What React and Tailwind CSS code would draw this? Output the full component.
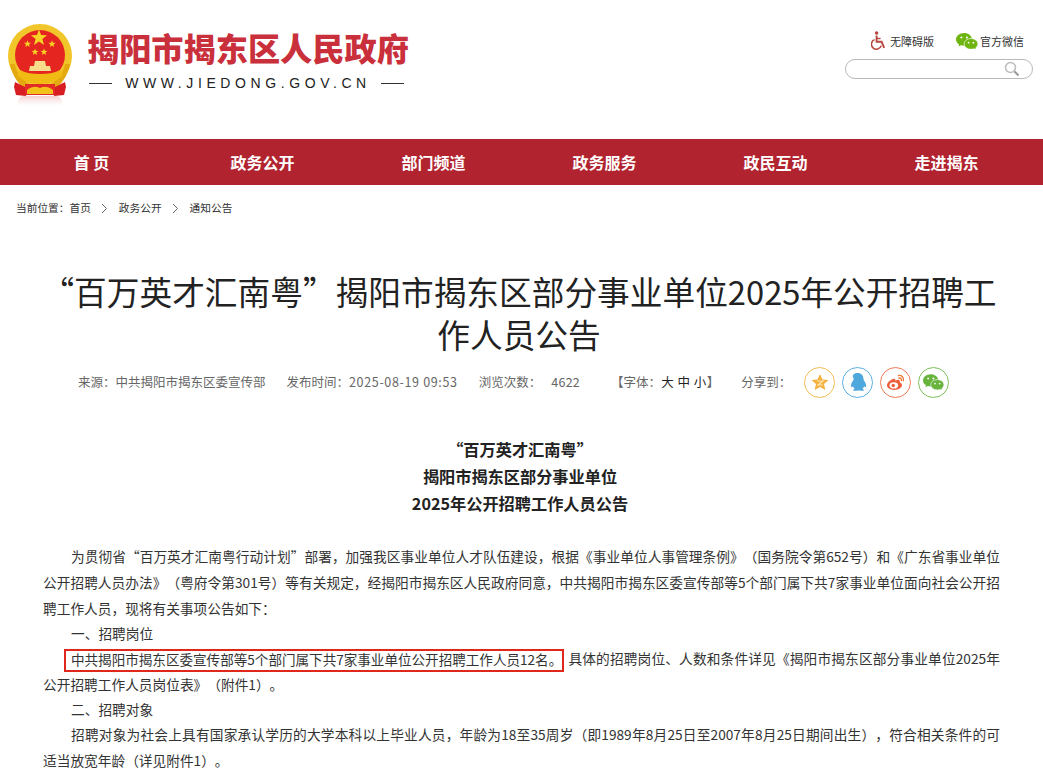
const F = { fontFamily: '"Noto Sans CJK SC", "Noto Sans", sans-serif' };

const starPoints = (cx, cy, r) =>
  Array.from({ length: 10 }, (_, i) => {
    const a = -Math.PI / 2 + (i * Math.PI) / 5;
    const rr = i % 2 ? r * 0.42 : r;
    return `${(cx + rr * Math.cos(a)).toFixed(2)},${(cy + rr * Math.sin(a)).toFixed(2)}`;
  }).join(" ");

function Emblem() {
  return (
    <svg width="66" height="84" viewBox="0 0 66 84" className="shrink-0">
      <defs>
        <linearGradient id="refl" x1="0" y1="0" x2="0" y2="1">
          <stop offset="0" stopColor="#eeb4b4" stopOpacity=".65" />
          <stop offset="1" stopColor="#fff" stopOpacity="0" />
        </linearGradient>
      </defs>
      <circle cx="32" cy="32" r="32" fill="#f1c62a" />
      <circle cx="32" cy="31" r="25" fill="#e5251f" />
      <path d="M2 40c2 11 8 20 15 25l4-5C13 55 8 47 7 40z" fill="#e3a90f" />
      <path d="M62 40c-2 11-8 20-15 25l-4-5c8-5 13-13 14-20z" fill="#e3a90f" />
      {[[31, 14, 8.5], [19.5, 20, 3.8], [44, 20, 3.8], [27, 28, 3.6], [36, 28, 3.6]].map(([x, y, r]) => (
        <polygon key={x} points={starPoints(x, y, r)} fill="#f8d326" />
      ))}
      <path d="M27 37h10l1 5h4l1 5H21l1-5h4z" fill="#f7dc8c" />
      <path d="M12 46c6 3 12 4 20 4s14-1 20-4l3 5c-6 6-14 9-23 9s-17-3-23-9z" fill="#f0bc14" />
      <path d="M7 58l10 5 2 4-1 5-10-1-2-8z" fill="#d81e22" />
      <path d="M57 58l-10 5-2 4 1 5 10-1 2-8z" fill="#d81e22" />
      <rect x="17" y="60" width="30" height="11" fill="#e22a26" />
      <path d="M19 66c5-4 9-4 13-2 4-2 8-2 13 2v4H19z" fill="#f3c21a" />
      <rect x="10" y="72" width="44" height="12" fill="url(#refl)" rx="6" />
    </svg>
  );
}

const Wheelchair = () => (
  <svg width="16" height="20" viewBox="0 0 16 20" fill="none">
    <circle cx="5.600" cy="2" r="1.800" fill="#b5473f" />
    <path d="M5.600 4.500v6.300h5l2.600 6" stroke="#b5473f" strokeWidth="1.900" />
    <path d="M5.600 7.500h4" stroke="#b5473f" strokeWidth="1.400" />
    <path d="M3.600 8.600a5 5 0 1 0 6.600 6.200" stroke="#b5473f" strokeWidth="1.500" />
  </svg>
);

const Wechat = ({ w = 22, h = 16, c = "#6fb512" }) => (
  <svg width={w} height={h} viewBox="0 0 22 16">
    <path d="M8.200 0C3.700 0 0 2.900 0 6.400c0 2 1.200 3.800 3.100 5L2.400 13.600l2.600-1.300c1 .3 2 .5 3.200.5h.7a5.200 5.200 0 0 1-.2-1.500c0-3.100 3-5.600 6.800-5.600h.5C15.300 2.400 12.100 0 8.200 0z" fill={c} />
    <ellipse cx="15" cy="10.900" rx="6.900" ry="5.400" fill={c} stroke="#fff" strokeWidth=".6" />
    <path d="M18 15l1.800 1-.4-2.400z" fill={c} />
    <circle cx="5.400" cy="4.400" r="1" fill="#fff" />
    <circle cx="10.900" cy="4.400" r="1" fill="#fff" />
    <circle cx="12.600" cy="9.700" r=".9" fill="#fff" />
    <circle cx="17.400" cy="9.700" r=".9" fill="#fff" />
  </svg>
);

const Circle = ({ border, children }) => (
  <div className={`flex h-[31px] w-[31px] items-center justify-center rounded-full border bg-white ${border}`}>{children}</div>
);

const Chevron = () => (
  <svg width="7" height="11" viewBox="0 0 7 11" fill="none" className="mx-[10.5px]">
    <path d="M1 1l4.500 4.500L1 10" stroke="#666" strokeWidth="1" />
  </svg>
);

const P = ({ children, className = "" }) => (
  <p className={`indent-[28px] ${className}`}>{children}</p>
);

export default function App() {
  return (
    <div style={F} className="h-[769px] w-[1043px] overflow-hidden bg-white [text-spacing-trim:space-all]">
      <header className="flex h-[139px] items-start justify-between pl-[8px] pr-[10px]">
        <div className="flex items-start pt-[24px]">
          <Emblem />
          <div className="ml-[13px] flex w-[322px] flex-col">
            <div className="h-[46px] whitespace-nowrap text-[32.2px] font-black leading-[46px] text-[#c9303b]">揭阳市揭东区人民政府</div>
            <div className="mt-[3px] flex items-center justify-between pl-[2px] pr-[5px]">
              <span className="h-px w-[23px] bg-[#333]" />
              <span className="ml-[3px] whitespace-nowrap text-[14px] font-medium leading-[20px] tracking-[4.6px] text-[#222]" style={{ fontFamily: '"Liberation Sans", sans-serif' }}>WWW.JIEDONG.GOV.CN</span>
              <span className="h-px w-[23px] bg-[#333]" />
            </div>
          </div>
        </div>
        <div className="flex w-[188px] flex-col items-stretch pt-[31px]">
          <div className="flex items-center justify-end gap-[22px] pr-[9px] text-[11px] leading-[20px] text-[#333]">
            <span className="flex items-center gap-[3px]"><Wheelchair />无障碍版</span>
            <span className="flex items-center gap-[2px]"><Wechat />官方微信</span>
          </div>
          <div className="mt-[8px] flex h-[20px] items-center justify-end rounded-full border border-[#b9b9b9] pr-[12px]">
            <svg width="16" height="16" viewBox="0 0 16 16" fill="none">
              <circle cx="6.500" cy="6.500" r="5" stroke="#bdbdbd" strokeWidth="1.600" />
              <path d="M10.500 10.500l4 4" stroke="#9a9a9a" strokeWidth="2.200" />
            </svg>
          </div>
        </div>
      </header>

      <nav className="flex h-[46px] items-center bg-[#b1232f] pl-[6px] text-[16px] font-bold text-white">
        {["首 页", "政务公开", "部门频道", "政务服务", "政民互动", "走进揭东"].map((t) => (
          <a key={t} className="w-[171px] text-center">{t}</a>
        ))}
      </nav>

      <div className="flex h-[47px] items-center pl-[16px] text-[10.7px] text-[#333]">
        <span>当前位置：首页</span>
        <Chevron />
        <span>政务公开</span>
        <Chevron />
        <span>通知公告</span>
      </div>

      <h1 className="ml-[39px] mt-[37px] w-[960px] text-center text-[32.7px] font-normal leading-[43px] text-[#222]">
        “百万英才汇南粤”揭阳市揭东区部分事业单位2025年公开招聘工作人员公告
      </h1>

      <div className="mt-[11px] flex h-[32px] items-center pl-[78px] text-[12.5px] text-[#666]">
        <span>来源：中共揭阳市揭东区委宣传部</span>
        <span className="ml-[21px]">发布时间：<span className="tracking-[0.65px]">2025-08-19 09:53</span></span>
        <span className="ml-[21px]">浏览次数：</span>
        <span className="ml-[10px] tracking-[0.3px]">4622</span>
        <span className="ml-[31px]">【字体：<span className="tracking-[0.5px] text-[#222]">大 中 小</span>】</span>
        <span className="ml-[22px]">分享到：</span>
        <div className="ml-[13px] flex gap-[7px]">
          <Circle border="border-[#f2bd54]">
            <svg width="18" height="18" viewBox="0 0 18 18"><polygon points="9,1 11.500,6.500 17.500,7 13,11 14.300,17 9,14 3.700,17 5,11 .5,7 6.500,6.500" fill="#f5b03c" /><path d="M6 8h6l-5 4h5" fill="none" stroke="#fbe7b8" strokeWidth="1.100" /></svg>
          </Circle>
          <Circle border="border-[#5cb0e0]">
            <svg width="19" height="20" viewBox="0 0 16 20" preserveAspectRatio="none"><path d="M8 1c3.200 0 5 2.400 5 5.600 0 1.100.3 1.600.9 2.600.9 1.600 1.600 3.500 1.300 5.400-.1 1-.8.8-1.600-.3-.3 1.200-.8 2-1.500 2.600 1 .4 1.600.9 1.400 1.400-.3.6-2.400.7-4 .2-.4.1-.8.1-1.200 0-1.600.5-3.700.4-4-.2-.2-.5.4-1 1.400-1.400-.7-.6-1.200-1.400-1.500-2.600-.8 1.100-1.500 1.300-1.600.3-.3-1.900.4-3.800 1.300-5.400.6-1 .9-1.500.9-2.600C3 3.400 4.800 1 8 1z" fill="#4fa8dc" /></svg>
          </Circle>
          <Circle border="border-[#ee7a55]">
            <svg width="20" height="18" viewBox="0 0 20 18" fill="none"><path d="M8.500 5.500C4.500 6.500 1 9.600 1 12.300 1 15 4.300 17 8.200 17c4.300 0 7.800-2.200 7.800-4.900 0-1.500-1.400-2.200-2.400-2.500.5-1.300.3-2.300-.6-2.700-1-.4-2.500.2-3.700.8.500-1.500-.5-2.600-1.800-2.200z" fill="#ec5f3a" /><ellipse cx="7.800" cy="12.400" rx="4.300" ry="3.100" fill="#fff" /><circle cx="7.300" cy="12.500" r="1.700" fill="#ec5f3a" /><path d="M12.500 2.500c3-.6 5.800 2 4.900 5.200M13 5c1.500-.3 2.800 1 2.400 2.500" stroke="#ee7a3a" strokeWidth="1.400" strokeLinecap="round" /></svg>
          </Circle>
          <Circle border="border-[#7fbf5c]"><Wechat w={21} h={16} c="#68b33c" /></Circle>
        </div>
      </div>

      <div className="mt-[38px] pr-[3px] text-center text-[16.2px] font-bold leading-[27px] text-[#222]">
        <div>“百万英才汇南粤”</div>
        <div>揭阳市揭东区部分事业单位</div>
        <div>2025年公开招聘工作人员公告</div>
      </div>

      <div className="mx-[43px] mt-[26px] text-justify text-[13.7px] leading-[26px] text-[#333]">
        <P>为贯彻省“百万英才汇南粤行动计划”部署，加强我区事业单位人才队伍建设，根据《事业单位人事管理条例》（国务院令第652号）和《广东省事业单位公开招聘人员办法》（粤府令第301号）等有关规定，经揭阳市揭东区人民政府同意，中共揭阳市揭东区委宣传部等5个部门属下共7家事业单位面向社会公开招聘工作人员，现将有关事项公告如下：</P>
        <P className="-mt-[1px]">一、招聘岗位</P>
        <P className="leading-[25px]"><span className="-ml-[7px] mr-[4px] inline-block h-[23px] whitespace-nowrap border-2 border-[#e0271c] pl-[5px] indent-0 align-[-1px] text-[13.57px] leading-[16px]">中共揭阳市揭东区委宣传部等5个部门属下共7家事业单位公开招聘工作人员12名。</span>具体的招聘岗位、人数和条件详见《揭阳市揭东区部分事业单位2025年公开招聘工作人员岗位表》（附件1）。</P>
        <P className="-mt-[1.5px]">二、招聘对象</P>
        <P className="-mt-[1px]">招聘对象为社会上具有国家承认学历的大学本科以上毕业人员，年龄为18至35周岁（即1989年8月25日至2007年8月25日期间出生），符合相关条件的可适当放宽年龄（详见附件1）。</P>
      </div>
    </div>
  );
}
